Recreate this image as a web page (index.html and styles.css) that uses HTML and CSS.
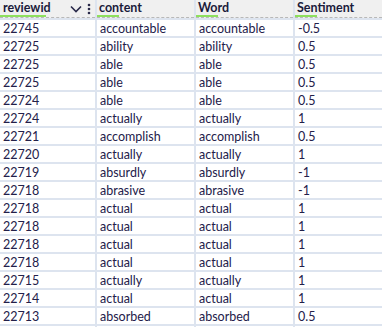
FILE: index.html
```html
<!DOCTYPE html>
<html>
<head>
<meta charset="utf-8">
<link rel="stylesheet" href="styles.css">
</head>
<body>
<div class="grid">
  <div class="row head">
    <div class="cell c1"><span class="hl wide">reviewid</span>
      <span class="icons">
        <svg width="12" height="8" viewBox="0 0 12 8"><path d="M1 1.5 L6 6.5 L11 1.5" fill="none" stroke="#2a2a4a" stroke-width="1.6"/></svg>
        <svg width="4" height="12" viewBox="0 0 4 12"><circle cx="2" cy="2" r="1.3" fill="#2a2a4a"/><circle cx="2" cy="6" r="1.3" fill="#2a2a4a"/><circle cx="2" cy="10" r="1.3" fill="#2a2a4a"/></svg>
      </span>
    </div>
    <div class="cell c2"><span class="hl">content</span></div>
    <div class="cell c3"><span class="hl">Word</span></div>
    <div class="cell c4"><span class="hl">Sentiment</span></div>
  </div>
  <div class="row"><div class="cell c1">22745</div><div class="cell c2">accountable</div><div class="cell c3">accountable</div><div class="cell c4">-0.5</div></div>
  <div class="row"><div class="cell c1">22725</div><div class="cell c2">ability</div><div class="cell c3">ability</div><div class="cell c4">0.5</div></div>
  <div class="row"><div class="cell c1">22725</div><div class="cell c2">able</div><div class="cell c3">able</div><div class="cell c4">0.5</div></div>
  <div class="row"><div class="cell c1">22725</div><div class="cell c2">able</div><div class="cell c3">able</div><div class="cell c4">0.5</div></div>
  <div class="row"><div class="cell c1">22724</div><div class="cell c2">able</div><div class="cell c3">able</div><div class="cell c4">0.5</div></div>
  <div class="row"><div class="cell c1">22724</div><div class="cell c2">actually</div><div class="cell c3">actually</div><div class="cell c4">1</div></div>
  <div class="row"><div class="cell c1">22721</div><div class="cell c2">accomplish</div><div class="cell c3">accomplish</div><div class="cell c4">0.5</div></div>
  <div class="row"><div class="cell c1">22720</div><div class="cell c2">actually</div><div class="cell c3">actually</div><div class="cell c4">1</div></div>
  <div class="row"><div class="cell c1">22719</div><div class="cell c2">absurdly</div><div class="cell c3">absurdly</div><div class="cell c4">-1</div></div>
  <div class="row"><div class="cell c1">22718</div><div class="cell c2">abrasive</div><div class="cell c3">abrasive</div><div class="cell c4">-1</div></div>
  <div class="row"><div class="cell c1">22718</div><div class="cell c2">actual</div><div class="cell c3">actual</div><div class="cell c4">1</div></div>
  <div class="row"><div class="cell c1">22718</div><div class="cell c2">actual</div><div class="cell c3">actual</div><div class="cell c4">1</div></div>
  <div class="row"><div class="cell c1">22718</div><div class="cell c2">actual</div><div class="cell c3">actual</div><div class="cell c4">1</div></div>
  <div class="row"><div class="cell c1">22718</div><div class="cell c2">actual</div><div class="cell c3">actual</div><div class="cell c4">1</div></div>
  <div class="row"><div class="cell c1">22715</div><div class="cell c2">actually</div><div class="cell c3">actually</div><div class="cell c4">1</div></div>
  <div class="row"><div class="cell c1">22714</div><div class="cell c2">actual</div><div class="cell c3">actual</div><div class="cell c4">1</div></div>
  <div class="row"><div class="cell c1">22713</div><div class="cell c2">absorbed</div><div class="cell c3">absorbed</div><div class="cell c4">0.5</div></div>
  <div class="row"><div class="cell c1"></div><div class="cell c2"></div><div class="cell c3"></div><div class="cell c4"></div></div>
</div>
</body>
</html>
```
FILE: styles.css
```css
html, body {
  margin: 0;
  padding: 0;
  background: #ffffff;
}
body {
  font-family: Lato, "Noto Sans", sans-serif;
  font-size: 12.5px;
  color: #23204a;
  width: 382px;
  height: 327px;
  overflow: hidden;
}
.grid {
  display: flex;
  flex-direction: column;
}
.row {
  display: grid;
  grid-template-columns: 95px 97px 97px 1fr;
  column-gap: 2px;
  background: #dde4ef;
  padding-top: 2px;
}
.cell {
  background: #ffffff;
  height: 16px;
  line-height: 17px;
  padding-left: 3px;
  white-space: nowrap;
  overflow: hidden;
}
.head {
  padding-top: 0;
}
.head .cell {
  background: #f0f0f0;
  height: 17px;
  line-height: 16px;
  font-weight: bold;
  color: #1b1b3b;
  padding-left: 2px;
  position: relative;
  border-bottom: 1px dashed #b8b8b8;
  box-sizing: content-box;
}
.head .c1 {
  padding-left: 3px;
  display: flex;
  align-items: flex-start;
}
.hl {
  position: relative;
  display: inline-block;
}
.hl::after {
  content: "";
  position: absolute;
  left: -3px;
  top: 15px;
  width: 23px;
  height: 2px;
  background: #8ee05e;
}
.hl.wide::after {
  width: 46px;
}
.icons {
  margin-left: auto;
  margin-right: 4px;
  display: flex;
  align-items: center;
  gap: 5px;
  height: 14px;
  margin-top: 2px;
}
```
